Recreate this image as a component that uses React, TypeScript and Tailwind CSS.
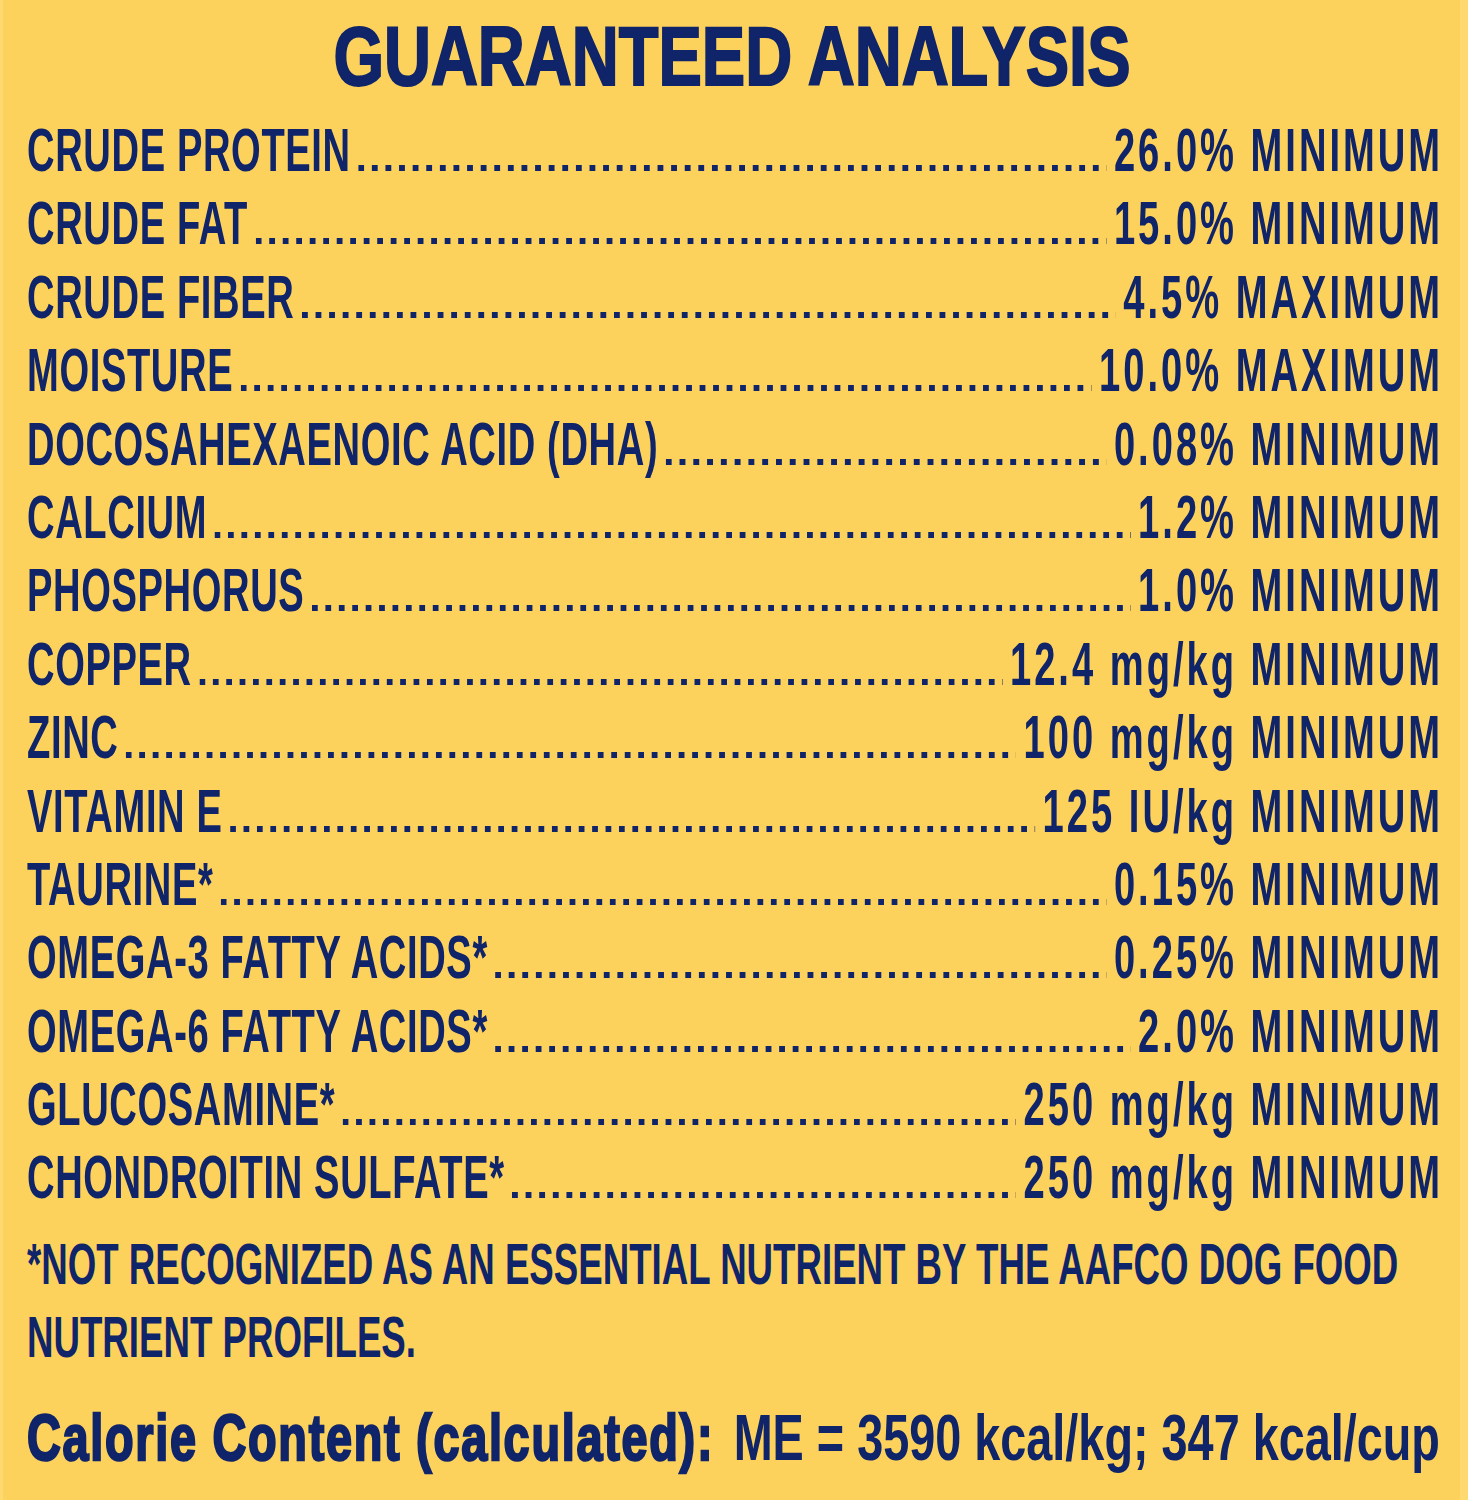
import React from 'react';

const ROWS = [
  { label: 'CRUDE PROTEIN', value: '26.0% MINIMUM' },
  { label: 'CRUDE FAT', value: '15.0% MINIMUM' },
  { label: 'CRUDE FIBER', value: '4.5% MAXIMUM' },
  { label: 'MOISTURE', value: '10.0% MAXIMUM' },
  { label: 'DOCOSAHEXAENOIC ACID (DHA)', value: '0.08% MINIMUM' },
  { label: 'CALCIUM', value: '1.2% MINIMUM' },
  { label: 'PHOSPHORUS', value: '1.0% MINIMUM' },
  { label: 'COPPER', value: '12.4 mg/kg MINIMUM' },
  { label: 'ZINC', value: '100 mg/kg MINIMUM' },
  { label: 'VITAMIN E', value: '125 IU/kg MINIMUM' },
  { label: 'TAURINE*', value: '0.15% MINIMUM' },
  { label: 'OMEGA-3 FATTY ACIDS*', value: '0.25% MINIMUM' },
  { label: 'OMEGA-6 FATTY ACIDS*', value: '2.0% MINIMUM' },
  { label: 'GLUCOSAMINE*', value: '250 mg/kg MINIMUM' },
  { label: 'CHONDROITIN SULFATE*', value: '250 mg/kg MINIMUM' },
];

const Row: React.FC<{ label: string; value: string }> = ({ label, value }) => (
  <div className="flex h-[73.4px] items-baseline leading-[73.4px]">
    <span className="whitespace-nowrap tracking-[1px]">{label}</span>
    <div className="mx-[12px] h-[6px] flex-1 bg-[linear-gradient(to_right,#0f2469_9.5px,transparent_9.5px)] bg-[length:21.4px_6px] bg-repeat-space" />
    <span className="-mr-[4.8px] whitespace-nowrap tracking-[4.8px]">{value}</span>
  </div>
);

const App: React.FC = () => {
  return (
    <div className="h-[1500px] w-[1468px] overflow-hidden border-r-[8px] border-l-[3px] border-[#fed96f] bg-[#fdd25c] font-['Liberation_Sans',Arial,sans-serif] text-[#0f2469]">
      <div className="flex h-[114px] justify-center pt-[6px]">
        <span className="inline-block scale-x-[0.774] whitespace-nowrap text-[84px] leading-[100px] font-bold [-webkit-text-stroke:2px_#0f2469]">
          GUARANTEED ANALYSIS
        </span>
      </div>

      <div className="ml-[24px] w-[2261px] origin-left scale-x-[0.625] text-[61px] font-bold">
        {ROWS.map((row, index) => (
          <Row key={index} label={row.label} value={row.value} />
        ))}
      </div>

      <div className="mt-[12px] ml-[24px] origin-left scale-x-[0.632] whitespace-nowrap text-[58px] leading-[73px] font-bold">
        *NOT RECOGNIZED AS AN ESSENTIAL NUTRIENT BY THE AAFCO DOG FOOD
        <br />
        NUTRIENT PROFILES.
      </div>

      <div className="mt-[25px] ml-[24px] origin-left scale-x-[0.72] whitespace-nowrap text-[65px] leading-[80px] font-bold">
        <span className="tracking-[2.4px] [-webkit-text-stroke:2.5px_#0f2469]">Calorie Content (calculated):</span>
        <span className="ml-[27px]">ME = 3590 kcal/kg; 347 kcal/cup</span>
      </div>
    </div>
  );
};

export default App;
